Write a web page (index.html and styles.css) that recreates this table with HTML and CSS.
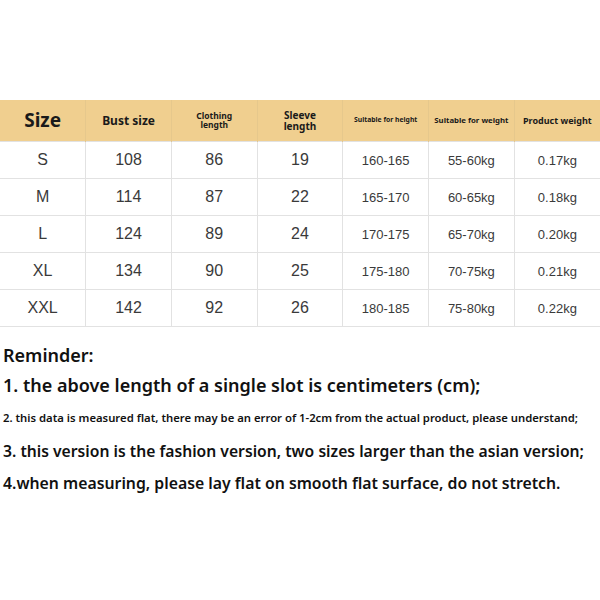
FILE: index.html
```html
<!DOCTYPE html>
<html>
<head>
<meta charset="utf-8">
<link rel="stylesheet" href="styles.css">
</head>
<body>
<div class="page">
  <table class="sizes">
    <thead>
      <tr>
        <th class="h-size">Size</th>
        <th class="h-bust">Bust size</th>
        <th class="h-cloth">Clothing<br>length</th>
        <th class="h-sleeve">Sleeve<br>length</th>
        <th class="h-height">Suitable for height</th>
        <th class="h-weight">Suitable for weight</th>
        <th class="h-prod">Product weight</th>
      </tr>
    </thead>
    <tbody>
      <tr><td>S</td><td>108</td><td>86</td><td>19</td><td class="sm">160-165</td><td class="sm">55-60kg</td><td class="sm">0.17kg</td></tr>
      <tr><td>M</td><td>114</td><td>87</td><td>22</td><td class="sm">165-170</td><td class="sm">60-65kg</td><td class="sm">0.18kg</td></tr>
      <tr><td>L</td><td>124</td><td>89</td><td>24</td><td class="sm">170-175</td><td class="sm">65-70kg</td><td class="sm">0.20kg</td></tr>
      <tr><td>XL</td><td>134</td><td>90</td><td>25</td><td class="sm">175-180</td><td class="sm">70-75kg</td><td class="sm">0.21kg</td></tr>
      <tr><td>XXL</td><td>142</td><td>92</td><td>26</td><td class="sm">180-185</td><td class="sm">75-80kg</td><td class="sm">0.22kg</td></tr>
    </tbody>
  </table>
  <div class="notes">
    <p class="n-title">Reminder:</p>
    <p class="n1">1. the above length of a single slot is centimeters (cm);</p>
    <p class="n2">2. this data is measured flat, there may be an error of 1-2cm from the actual product, please understand;</p>
    <p class="n3">3. this version is the fashion version, two sizes larger than the asian version;</p>
    <p class="n4">4.when measuring, please lay flat on smooth flat surface, do not stretch.</p>
  </div>
</div>
</body>
</html>
```
FILE: styles.css
```css
html, body {
  margin: 0;
  padding: 0;
  background: #ffffff;
}
.page {
  width: 600px;
  height: 600px;
  padding-top: 100px;
  box-sizing: border-box;
}
.sizes {
  width: 600px;
  border-collapse: collapse;
  table-layout: fixed;
}
.sizes th {
  background: #f0cf8f;
  height: 41px;
  padding: 0;
  font-family: "Noto Sans", sans-serif;
  font-weight: 700;
  color: #1a1a1a;
  line-height: 1.25;
  border-left: 1px solid #e6c88c;
  border-right: 1px solid #e6c88c;
}
.sizes td {
  height: 36px;
  padding: 0;
  text-align: center;
  font-family: "Liberation Sans", Arial, sans-serif;
  font-size: 16px;
  color: #3a3a3a;
  border: 1px solid #e2e2e2;
}
.sizes td.sm { font-size: 13px; }
.sizes th:first-child, .sizes td:first-child { border-left: none; }
.sizes th:last-child, .sizes td:last-child { border-right: none; }
.h-size { font-size: 19px; }
.h-bust { font-size: 12px; }
.h-cloth { font-size: 8.5px; line-height: 1.05 !important; }
.h-sleeve { font-size: 10px; line-height: 1.05 !important; }
.h-height { font-size: 6.8px; }
.h-weight { font-size: 7.8px; }
.h-prod { font-size: 9px; }
.notes {
  padding-left: 3px;
  font-family: "Noto Sans", sans-serif;
  font-weight: 600;
  color: #111111;
}
.notes p {
  margin: 0;
  white-space: nowrap;
}
.n-title { font-size: 18px; margin-top: 14px !important; line-height: 28px; }
.n1 { font-size: 18px; line-height: 32px; }
.n2 { font-size: 11.3px; line-height: 34px; }
.n3 { font-size: 15.7px; line-height: 32px; }
.n4 { font-size: 15.8px; line-height: 32px; }
```
